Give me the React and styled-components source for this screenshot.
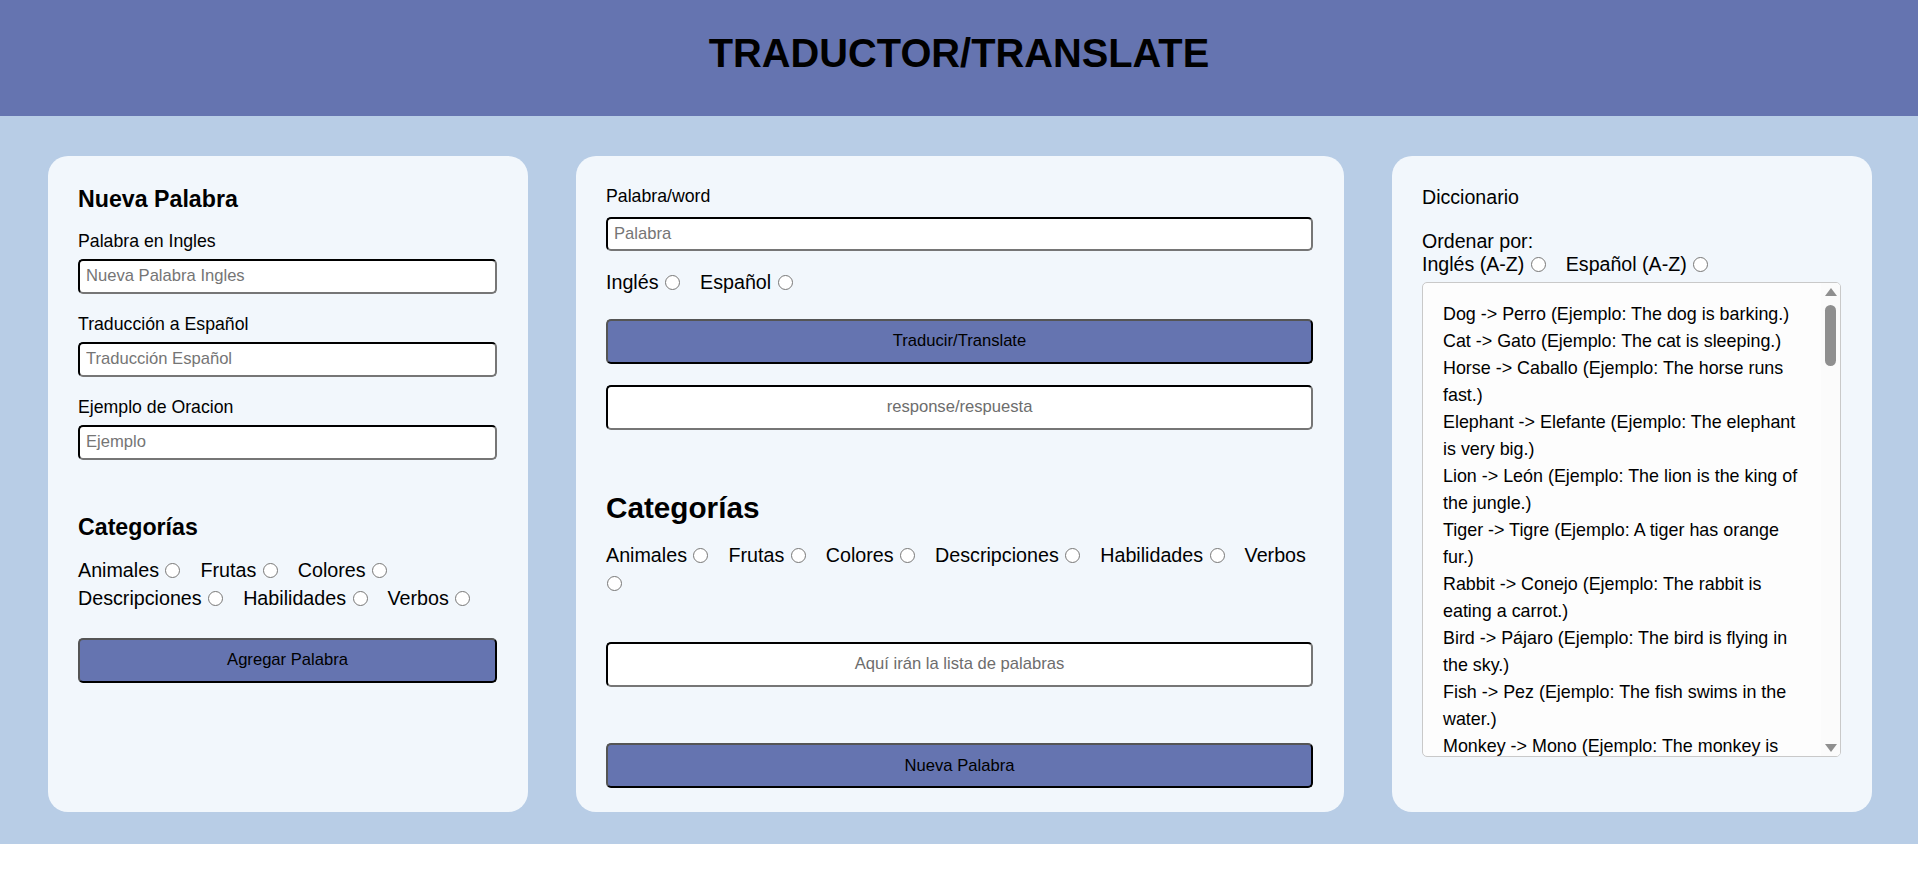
import React from 'react';
import styled, { createGlobalStyle } from 'styled-components';

const categorias = ['Animales', 'Frutas', 'Colores', 'Descripciones', 'Habilidades', 'Verbos'];

const palabras = [
    'Dog -> Perro (Ejemplo: The dog is barking.)',
    'Cat -> Gato (Ejemplo: The cat is sleeping.)',
    'Horse -> Caballo (Ejemplo: The horse runs fast.)',
    'Elephant -> Elefante (Ejemplo: The elephant is very big.)',
    'Lion -> León (Ejemplo: The lion is the king of the jungle.)',
    'Tiger -> Tigre (Ejemplo: A tiger has orange fur.)',
    'Rabbit -> Conejo (Ejemplo: The rabbit is eating a carrot.)',
    'Bird -> Pájaro (Ejemplo: The bird is flying in the sky.)',
    'Fish -> Pez (Ejemplo: The fish swims in the water.)',
    'Monkey -> Mono (Ejemplo: The monkey is climbing a tree.)',
    'Apple -> Manzana (Ejemplo: The apple is red.)',
    'Banana -> Plátano (Ejemplo: I eat a banana every day.)',
    'Orange -> Naranja (Ejemplo: The orange is sweet.)',
];

function RadioOptions({ name, options }) {
    return options.map((op) => (
        <Option key={op}>
            {op} <Radio type="radio" name={name} />
        </Option>
    ));
}

export default function App() {
    return (
        <>
            <GlobalStyle />
            <Header>
                <Title>TRADUCTOR/TRANSLATE</Title>
            </Header>

            <Main>
                <Card>
                    <Heading>Nueva Palabra</Heading>
                    <Field>
                        <Label>Palabra en Ingles</Label>
                        <Input placeholder="Nueva Palabra Ingles" />
                    </Field>
                    <Field>
                        <Label>Traducción a Español</Label>
                        <Input placeholder="Traducción Español" />
                    </Field>
                    <Field>
                        <Label>Ejemplo de Oracion</Label>
                        <Input placeholder="Ejemplo" />
                    </Field>

                    <Heading $top={54}>Categorías</Heading>
                    <RadioRow $top={15.5}>
                        <RadioOptions name="cat-nueva" options={categorias} />
                    </RadioRow>
                    <Button $top={25.5}>Agregar Palabra</Button>
                </Card>

                <Card>
                    <Label>Palabra/word</Label>
                    <Input $top={9.5} $height={34} placeholder="Palabra" />
                    <RadioRow $top={17}>
                        <RadioOptions name="idioma" options={['Inglés', 'Español']} />
                    </RadioRow>
                    <Button $top={23}>Traducir/Translate</Button>
                    <OutputBox $top={21}>response/respuesta</OutputBox>

                    <Heading $size={29.7} $top={61}>Categorías</Heading>
                    <RadioRow $top={16.5}>
                        <RadioOptions name="cat-buscar" options={categorias} />
                    </RadioRow>
                    <OutputBox $top={44.5}>Aquí irán la lista de palabras</OutputBox>
                    <Button $top={56.5}>Nueva Palabra</Button>
                </Card>

                <Card>
                    <Subtitle>Diccionario</Subtitle>
                    <SortBlock>
                        Ordenar por:<br />
                        <RadioOptions name="orden" options={['Inglés (A-Z)', 'Español (A-Z)']} />
                    </SortBlock>
                    <ListFrame>
                        <WordList>
                            {palabras.map((p) => (
                                <WordItem key={p}>{p}</WordItem>
                            ))}
                        </WordList>
                        <ScrollTrack>
                            <ArrowUp />
                            <Thumb />
                            <ArrowDown />
                        </ScrollTrack>
                    </ListFrame>
                </Card>
            </Main>
        </>
    );
}

const GlobalStyle = createGlobalStyle`
    body {
        margin: 0;
        background: #ffffff;
        font-family: "Liberation Sans", Arial, sans-serif;
        color: #000;
    }
`

const Header = styled.header`
    height: 116px;
    box-sizing: border-box;
    padding-top: 31px;
    background-color: #6574b0;
    text-align: center;
`

const Title = styled.h1`
    margin: 0;
    font-size: 39.8px;
    font-weight: bold;
    line-height: normal;
`

const Main = styled.main`
    display: grid;
    grid-template-columns: 480px 768px 480px;
    column-gap: 48px;
    align-items: start;
    height: 728px;
    box-sizing: border-box;
    padding: 40px 48px 32px;
    background-color: #b8cde6;
`

const Card = styled.section`
    height: 656px;
    box-sizing: border-box;
    padding: 30px 31px 0 30px;
    background-color: #f2f7fc;
    border-radius: 20px;
`

const Heading = styled.h2`
    margin: ${(p) => p.$top || 0}px 0 0;
    font-size: ${(p) => p.$size || 23.2}px;
    font-weight: bold;
    line-height: normal;
`

const Subtitle = styled.div`
    font-size: 19.6px;
    line-height: normal;
`

const Field = styled.div`
    margin-top: 18px;

    & + & {
        margin-top: 20.5px;
    }
`

const Label = styled.label`
    display: block;
    font-size: 17.7px;
    line-height: normal;
`

const Input = styled.input`
    display: block;
    width: 100%;
    height: ${(p) => p.$height || 35}px;
    box-sizing: border-box;
    margin: ${(p) => p.$top || 6.5}px 0 0;
    padding: 0 6px;
    border: 2px inset #767676;
    border-top-color: #1f1f1f;
    border-left-color: #1f1f1f;
    border-radius: 5px;
    background: #fff;
    font-family: inherit;
    font-size: 16.6px;

    &::placeholder {
        color: #757575;
    }
`

const RadioRow = styled.div`
    margin-top: ${(p) => p.$top}px;
    font-size: 19.7px;
    line-height: 28px;
`

const Option = styled.label`
    margin-right: 17px;
`

const Radio = styled.input`
    width: 15px;
    height: 15px;
    margin: 0 3px 0 1px;
    vertical-align: -1px;
`

const Button = styled.button`
    display: block;
    width: 100%;
    height: 45px;
    box-sizing: border-box;
    margin-top: ${(p) => p.$top}px;
    border: 2px outset #000;
    border-top-color: #555;
    border-left-color: #555;
    border-radius: 5px;
    background-color: #6574b0;
    color: #000;
    font-family: inherit;
    font-size: 16.6px;
    cursor: pointer;
`

const OutputBox = styled.div`
    display: flex;
    align-items: center;
    justify-content: center;
    height: 45px;
    box-sizing: border-box;
    margin-top: ${(p) => p.$top}px;
    border: 2px inset #767676;
    border-top-color: #1f1f1f;
    border-left-color: #1f1f1f;
    border-radius: 5px;
    background: #fff;
    color: #6d6d6d;
    font-size: 16.6px;
`

const SortBlock = styled.div`
    margin-top: 20.8px;
    font-size: 19.6px;
    line-height: 23px;
`

const ListFrame = styled.div`
    position: relative;
    height: 475px;
    box-sizing: border-box;
    margin-top: 6px;
    background: #fdfdfd;
    border: 1px solid #c9c9c9;
    border-radius: 5px;
    overflow: hidden;
`

const WordList = styled.ul`
    height: 100%;
    box-sizing: border-box;
    margin: 0;
    padding: 18px 34px 20px 20px;
    list-style: none;
    overflow-y: auto;
    scrollbar-width: none;
`

const WordItem = styled.li`
    font-size: 17.9px;
    line-height: 27px;
`

/* scrollbar drawn over the right edge of the list */
const ScrollTrack = styled.div`
    position: absolute;
    top: 0;
    right: 0;
    bottom: 0;
    width: 19px;
    display: flex;
    flex-direction: column;
    align-items: center;
    background: #fbfbfb;
`

const ArrowUp = styled.div`
    width: 0;
    height: 0;
    margin-top: 5px;
    border-left: 6px solid transparent;
    border-right: 6px solid transparent;
    border-bottom: 8px solid #8f8f8f;
`

const Thumb = styled.div`
    width: 11px;
    height: 61px;
    margin-top: 9px;
    border-radius: 6px;
    background: #8f8f8f;
`

const ArrowDown = styled.div`
    width: 0;
    height: 0;
    margin-top: auto;
    margin-bottom: 4px;
    border-left: 6px solid transparent;
    border-right: 6px solid transparent;
    border-top: 8px solid #8f8f8f;
`
